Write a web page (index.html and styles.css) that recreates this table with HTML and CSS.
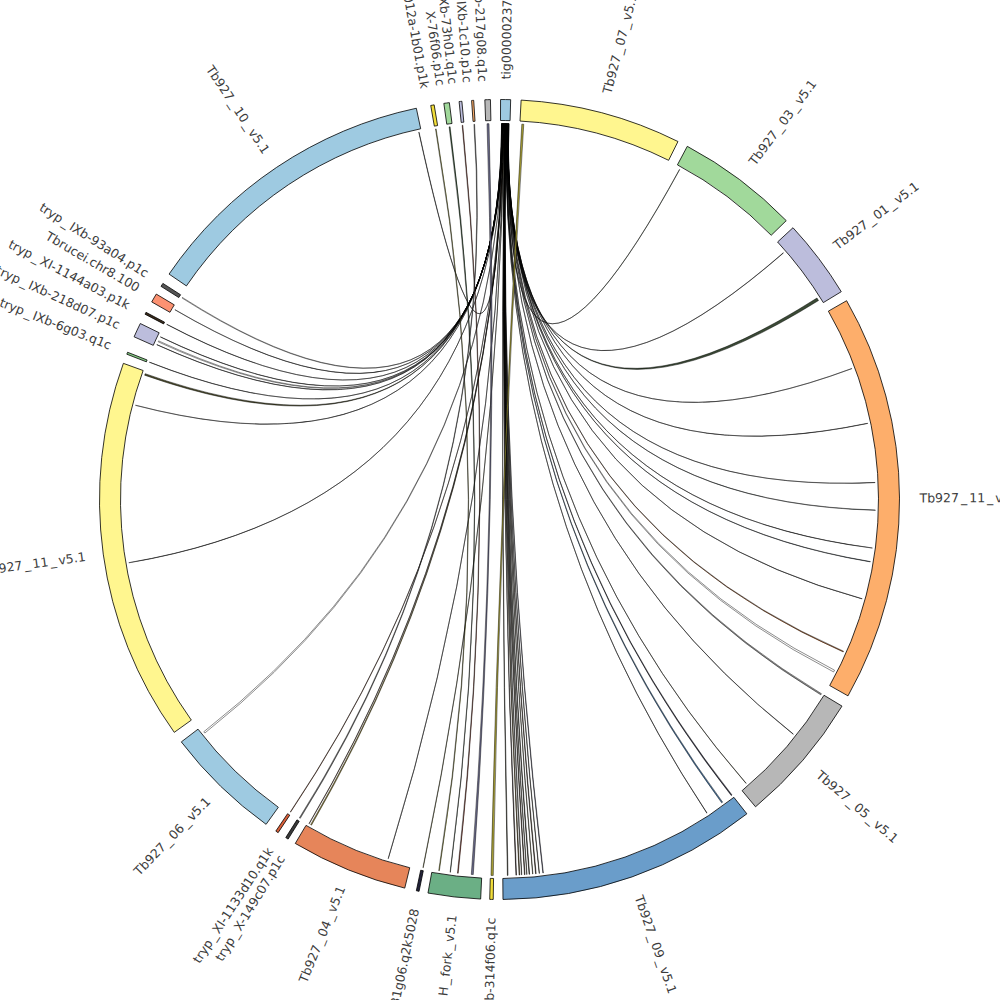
FILE: index.html
```html
<!DOCTYPE html>
<html lang="en">
<head>
<meta charset="utf-8">
<title>Circos contig links</title>
<link rel="stylesheet" href="styles.css">
</head>
<body>
<svg class="circos" width="1000" height="1000" viewBox="0 0 1000 1000" xmlns="http://www.w3.org/2000/svg">
  <g id="chords"></g>
  <g id="ring"></g>
  <g class="labels">
    <text class="lbl" x="919.5" y="499.5" dy="0.35em" transform="rotate(-89.1 499.5 499.5)">tig00000237</text>
    <text class="lbl" x="919.5" y="499.5" dy="0.35em" transform="rotate(-75.2 499.5 499.5)">Tb927<tspan dx="2">_</tspan><tspan dx="2">07</tspan><tspan dx="2">_</tspan><tspan dx="2">v5.1</tspan></text>
    <text class="lbl" x="919.5" y="499.5" dy="0.35em" transform="rotate(-53.1 499.5 499.5)">Tb927<tspan dx="2">_</tspan><tspan dx="2">03</tspan><tspan dx="2">_</tspan><tspan dx="2">v5.1</tspan></text>
    <text class="lbl" x="919.5" y="499.5" dy="0.35em" transform="rotate(-37 499.5 499.5)">Tb927<tspan dx="2">_</tspan><tspan dx="2">01</tspan><tspan dx="2">_</tspan><tspan dx="2">v5.1</tspan></text>
    <text class="lbl" x="919.5" y="499.5" dy="0.35em" transform="rotate(-0.2 499.5 499.5)">Tb927<tspan dx="2">_</tspan><tspan dx="2">11</tspan><tspan dx="2">_</tspan><tspan dx="2">v5.1</tspan></text>
    <text class="lbl" x="919.5" y="499.5" dy="0.35em" transform="rotate(40.65 499.5 499.5)">Tb927<tspan dx="2">_</tspan><tspan dx="2">05</tspan><tspan dx="2">_</tspan><tspan dx="2">v5.1</tspan></text>
    <text class="lbl" x="919.5" y="499.5" dy="0.35em" transform="rotate(70.65 499.5 499.5)">Tb927<tspan dx="2">_</tspan><tspan dx="2">09</tspan><tspan dx="2">_</tspan><tspan dx="2">v5.1</tspan></text>

    <text class="lbl end" x="81.5" y="499.5" dy="0.35em" transform="rotate(271.15 499.5 499.5)">b-314f06.q1c</text>
    <text class="lbl end" x="81.5" y="499.5" dy="0.35em" transform="rotate(276.5 499.5 499.5)">H<tspan dx="2">_</tspan><tspan dx="2">fork</tspan><tspan dx="2">_</tspan><tspan dx="2">v5.1</tspan></text>
    <text class="lbl end" x="81.5" y="499.5" dy="0.35em" transform="rotate(281.7 499.5 499.5)">31g06.q2k5028</text>
    <text class="lbl end" x="81.5" y="499.5" dy="0.35em" transform="rotate(292.2 499.5 499.5)">Tb927<tspan dx="2">_</tspan><tspan dx="2">04</tspan><tspan dx="2">_</tspan><tspan dx="2">v5.1</tspan></text>
    <text class="lbl end" x="81.5" y="499.5" dy="0.35em" transform="rotate(301.4 499.5 499.5)">tryp<tspan dx="2">_</tspan><tspan dx="2">X-149c07.p1c</tspan></text>
    <text class="lbl end" x="81.5" y="499.5" dy="0.35em" transform="rotate(303.3 499.5 499.5)">tryp<tspan dx="2">_</tspan><tspan dx="2">XI-1133d10.q1k</tspan></text>
    <text class="lbl end" x="81.5" y="499.5" dy="0.35em" transform="rotate(314.2 499.5 499.5)">Tb927<tspan dx="2">_</tspan><tspan dx="2">06</tspan><tspan dx="2">_</tspan><tspan dx="2">v5.1</tspan></text>
    <text class="lbl end" x="81.5" y="499.5" dy="0.35em" transform="rotate(352.15 499.5 499.5)">Tb927<tspan dx="2">_</tspan><tspan dx="2">11</tspan><tspan dx="2">_</tspan><tspan dx="2">v5.1</tspan></text>
    <text class="lbl end" x="81.5" y="499.5" dy="0.35em" transform="rotate(21.6 499.5 499.5)">tryp<tspan dx="2">_</tspan><tspan dx="2">IXb-6g03.q1c</tspan></text>
    <text class="lbl end" x="81.5" y="499.5" dy="0.35em" transform="rotate(24.6 499.5 499.5)">tryp<tspan dx="2">_</tspan><tspan dx="2">IXb-218d07.p1c</tspan></text>
    <text class="lbl end" x="81.5" y="499.5" dy="0.35em" transform="rotate(27.6 499.5 499.5)">tryp<tspan dx="2">_</tspan><tspan dx="2">XI-1144a03.p1k</tspan></text>
    <text class="lbl end" x="81.5" y="499.5" dy="0.35em" transform="rotate(30.3 499.5 499.5)">Tbrucei.chr8.100</text>
    <text class="lbl end" x="81.5" y="499.5" dy="0.35em" transform="rotate(32.6 499.5 499.5)">tryp<tspan dx="2">_</tspan><tspan dx="2">IXb-93a04.p1c</tspan></text>
    <text class="lbl end" x="81.5" y="499.5" dy="0.35em" transform="rotate(56.15 499.5 499.5)">Tb927<tspan dx="2">_</tspan><tspan dx="2">10</tspan><tspan dx="2">_</tspan><tspan dx="2">v5.1</tspan></text>
    <text class="lbl end" x="81.5" y="499.5" dy="0.35em" transform="rotate(79.7 499.5 499.5)">012a-1b01.p1k</text>
    <text class="lbl end" x="81.5" y="499.5" dy="0.35em" transform="rotate(81.9 499.5 499.5)">X-76f06.p1c</text>
    <text class="lbl end" x="81.5" y="499.5" dy="0.35em" transform="rotate(83.6 499.5 499.5)">IXb-73h01.q1c</text>
    <text class="lbl end" x="81.5" y="499.5" dy="0.35em" transform="rotate(85.6 499.5 499.5)">IXb-1c10.p1c</text>
    <text class="lbl end" x="81.5" y="499.5" dy="0.35em" transform="rotate(87.7 499.5 499.5)">b-217g08.q1c</text>
  </g>
</svg>
<script src="script.js"></script>
</body>
</html>
```

FILE: styles.css
```css
html, body {
  margin: 0;
  padding: 0;
  background: #ffffff;
  overflow: hidden;
}

.circos {
  display: block;
  width: 1000px;
  height: 1000px;
}

.seg {
  stroke: #000000;
  stroke-width: 0.8;
}

.chord {
  stroke: #000000;
  stroke-width: 0.45;
}

.lbl {
  font-family: "DejaVu Sans", "Liberation Sans", sans-serif;
  font-size: 12.5px;
  fill: #3c3c3c;
}

.lbl.end {
  text-anchor: end;
}
```

FILE: script.js
```js
(function () {
  var NS = 'http://www.w3.org/2000/svg';
  var cx = 499.5, cy = 499.5, R0 = 379, R1 = 400, RC = 376;

  function P(r, a) {
    var t = a * Math.PI / 180;
    return (cx + r * Math.sin(t)).toFixed(2) + ',' + (cy - r * Math.cos(t)).toFixed(2);
  }
  function add(g, d, fill, cls) {
    var p = document.createElementNS(NS, 'path');
    p.setAttribute('d', d);
    p.setAttribute('fill', fill);
    p.setAttribute('class', cls);
    g.appendChild(p);
  }

  var segs = [
    [0.15, 1.6, '#9ecae1'],
    [3.1, 26.5, '#fff68f'],
    [28.0, 45.8, '#a1d99b'],
    [47.2, 58.7, '#bcbddc'],
    [60.2, 119.4, '#fdae6b'],
    [121.1, 140.2, '#b7b7b7'],
    [141.8, 179.5, '#6a9dca'],
    [180.9, 181.4, '#f2de3a'],
    [182.7, 190.3, '#6baf85'],
    [191.6, 192.0, '#23233a'],
    [193.7, 210.7, '#e6855a'],
    [211.9, 212.3, '#3a3a3a'],
    [213.6, 214.0, '#d9603a'],
    [215.7, 232.7, '#9ecae1'],
    [234.4, 289.9, '#fff68f'],
    [291.3, 291.6, '#86cc85'],
    [294.0, 296.1, '#bcbddc'],
    [297.6, 297.9, '#3a2a1a'],
    [299.6, 300.9, '#fc9272'],
    [302.2, 302.7, '#555555'],
    [304.3, 348.0, '#9ecae1'],
    [350.1, 350.6, '#f2de3a'],
    [352.0, 352.8, '#a1d99b'],
    [354.2, 354.6, '#bcbddc'],
    [356.0, 356.3, '#fdae6b'],
    [357.9, 358.7, '#b7b7b7']
  ];

  var ring = document.getElementById('ring');
  segs.forEach(function (s) {
    var a = s[0], b = s[1], L = (b - a) > 180 ? 1 : 0;
    var d = 'M' + P(R1, a) + 'A' + R1 + ',' + R1 + ' 0 ' + L + ' 1 ' + P(R1, b) +
      'L' + P(R0, b) + 'A' + R0 + ',' + R0 + ' 0 ' + L + ' 0 ' + P(R0, a) + 'Z';
    add(ring, d, s[2], 'seg');
  });

  function ribbon(a, wa, b, wb) {
    return 'M' + P(RC, a) + 'Q' + cx + ',' + cy + ' ' + P(RC, b + wb) +
      'A' + RC + ',' + RC + ' 0 0 0 ' + P(RC, b) +
      'Q' + cx + ',' + cy + ' ' + P(RC, a + wa) +
      'A' + RC + ',' + RC + ' 0 0 0 ' + P(RC, a) + 'Z';
  }

  // links from tig00000237
  var T = [
    [28.6, 0.04, '#5e7f4e'], [49.0, 0.04, '#333333'], [57.6, 0.45, '#3a4a35'],
    [69.6, 0.03, '#222222'], [78.3, 0.03, '#222222'], [87.4, 0.03, '#222222'],
    [91.6, 0.05, '#4f6464'], [97.4, 0.03, '#222222'], [99.5, 0.05, '#506070'],
    [105.3, 0.03, '#222222'], [113.8, 0.12, '#b0602a'], [117.0, 0.3, '#ffffff'],
    [121.1, 0.2, '#8c8c8c'], [128.6, 0.03, '#222222'], [139.0, 0.03, '#5a5a2a'],
    [141.8, 0.15, '#2b2b3e'], [143.6, 0.18, '#3f70a0'], [146.5, 0.03, '#222222'],
    [173.3, 0.08, '#55557a'], [173.9, 0.05, '#2a2a1a'], [174.4, 0.1, '#3b2a1a'],
    [174.9, 0.05, '#5a5a20'], [175.4, 0.1, '#2a2a1a'], [175.8, 0.05, '#444422'],
    [176.1, 0.1, '#3b2a1a'], [176.6, 0.05, '#2a2a1a'], [176.9, 0.12, '#5a4a20'],
    [177.4, 0.1, '#2a1a1a'], [178.7, 0.1, '#3b3b2a'],
    [191.7, 0.05, '#8a8a30'], [197.2, 0.03, '#222222'],
    [210.0, 0.15, '#9a8a3a'], [210.4, 0.05, '#8a4a2a'], [213.75, 0.06, '#a0522d'],
    [231.6, 0.25, '#ffffff'], [260.3, 0.03, '#222222'], [284.5, 0.03, '#222222'],
    [289.3, 0.25, '#4a4a2a'], [291.4, 0.03, '#222222'],
    [294.3, 0.03, '#222222'], [294.8, 0.15, '#ffffff'], [295.6, 0.03, '#222222'],
    [297.75, 0.03, '#222222'], [300.3, 0.03, '#222222'], [302.4, 0.1, '#ffffff'],
    [347.6, 0.05, '#222222']
  ];
  T.sort(function (x, y) { return x[0] - y[0]; });

  var chords = document.getElementById('chords');
  var aMax = 1.45, aMin = 0.3, n = T.length, step = (aMax - aMin) / n;
  T.forEach(function (c, i) {
    var a = aMax - (i + 1) * step;
    add(chords, ribbon(a, step * 0.5, c[0], c[1]), c[2], 'chord');
  });

  // other links
  var O = [
    [3.4, 0.3, 180.95, 0.35, '#a59d35'],
    [350.2, 0.1, 189.2, 0.1, '#a0a040'],
    [352.3, 0.15, 187.5, 0.05, '#2f4f2f'],
    [354.3, 0.1, 186.3, 0.12, '#8b3a2a'],
    [356.1, 0.1, 212.0, 0.15, '#777777'],
    [358.1, 0.3, 184.0, 0.3, '#6a6a8a']
  ];
  O.forEach(function (c) {
    add(chords, ribbon(c[0], c[1], c[2], c[3]), c[4], 'chord');
  });
})();
```
